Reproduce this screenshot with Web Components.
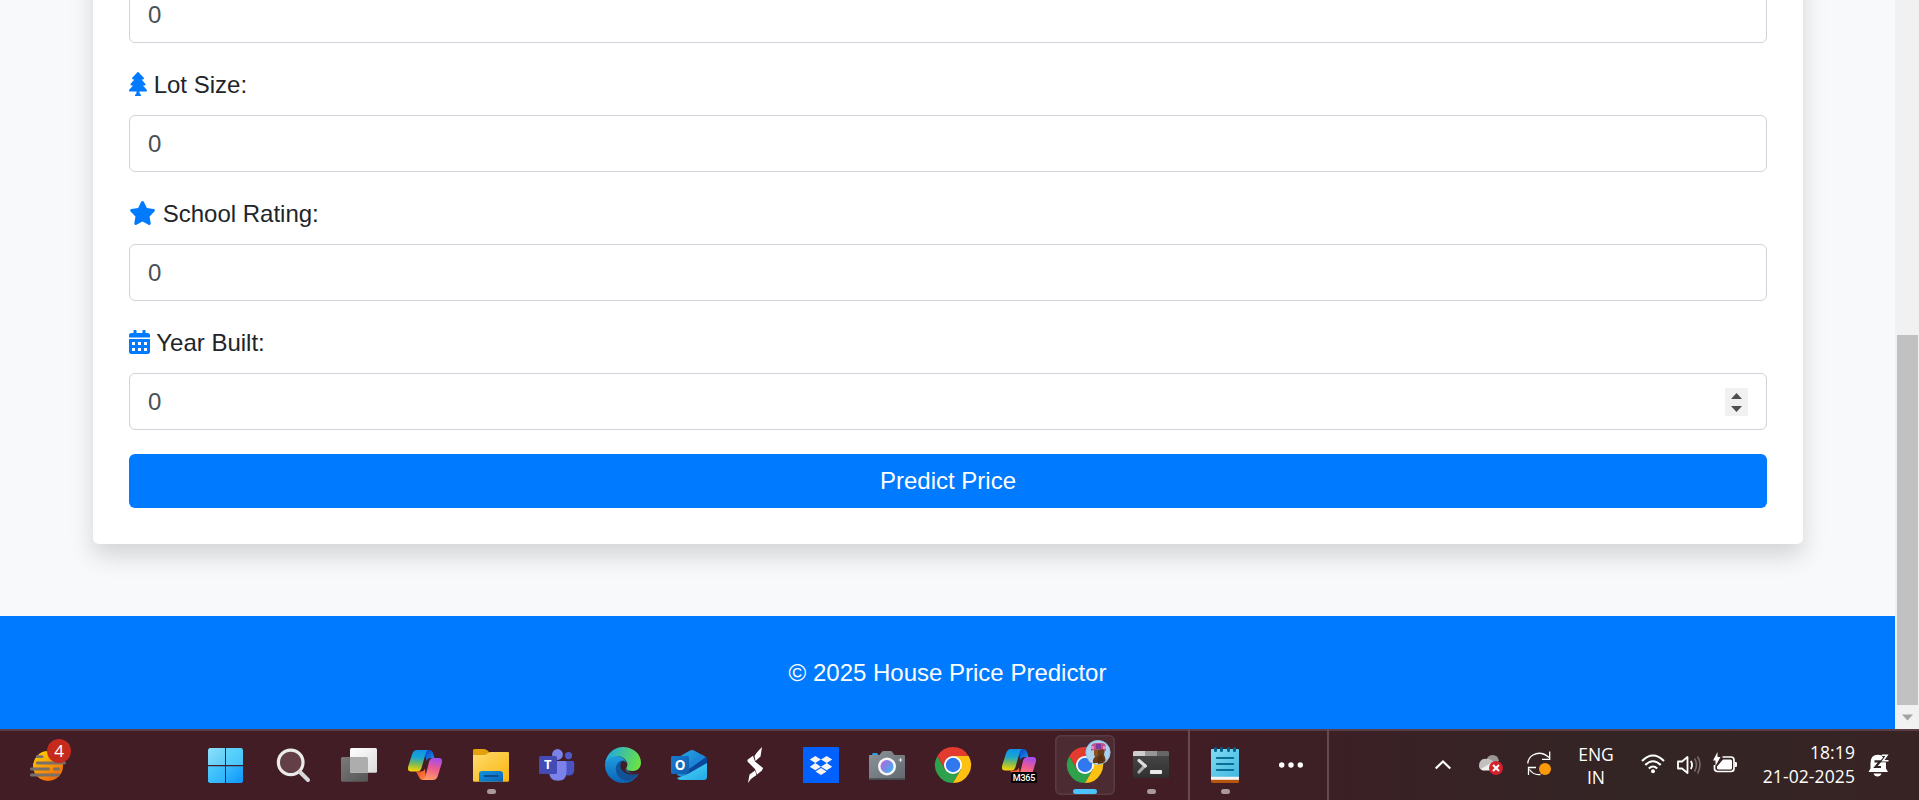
<!DOCTYPE html>
<html lang="en">
<head>
<meta charset="utf-8">
<title>House Price Predictor</title>
<style>
html,body{margin:0;height:100%;overflow:hidden}
body{font-family:"Liberation Sans",Arial,sans-serif;font-size:24px;line-height:36px;color:#212529;background:#f8f9fb}
</style>
</head>
<body>
<desktop-screen>
  <page-view slot="page">
    <predict-card>
      <form-field value="0"></form-field>
      <form-field icon="tree" value="0">Lot Size:</form-field>
      <form-field icon="star" value="0">School Rating:</form-field>
      <form-field icon="calendar" value="0" stepper>Year Built:</form-field>
      <submit-button>Predict Price</submit-button>
    </predict-card>
    <page-footer slot="footer">© 2025 House Price Predictor</page-footer>
  </page-view>
  <scroll-bar slot="scroll"></scroll-bar>
  <task-bar slot="taskbar"></task-bar>
</desktop-screen>

<script>
const define = (name, html) => customElements.define(name, class extends HTMLElement {
  constructor() {
    super();
    this.attachShadow({mode: 'open'});
  }
  connectedCallback() {
    this.shadowRoot.innerHTML = typeof html === 'function' ? html(this) : html;
  }
});

define('desktop-screen', `
<style>
:host{display:grid;grid-template:729px 71px / 1fr 24px;width:100%;height:800px;overflow:hidden}
.bar{grid-column:1 / 3;display:grid}
.cell{display:grid;min-height:0}
</style>
<div class="cell"><slot name="page"></slot></div>
<div class="cell"><slot name="scroll"></slot></div>
<div class="bar"><slot name="taskbar"></slot></div>`);

define('page-view', `
<style>
:host{display:flex;flex-direction:column;justify-content:flex-end;height:729px;overflow:hidden;background:#f8f9fb}
main{padding:0 92px 72px 93px}
</style>
<main><slot></slot></main><slot name="footer"></slot>`);

define('predict-card', `
<style>
:host{display:flex;flex-direction:column;gap:24px;padding:36px;background:#fff;border-radius:6px;box-shadow:0 12px 24px rgba(0,0,0,.15)}
</style><slot></slot>`);

const FIELD_ICONS = {
  tree: [384, 'M378.3 378.5 298.4 288h30.6c9 0 17-5 20.8-13.1 3.8-8 2.6-17.3-3.3-24L268.4 160h28.9c9.1 0 17.3-5.4 20.9-13.6 3.5-8.1 1.9-17.6-4.2-24.1L203.7 4.8c-6-6.4-17.3-6.4-23.3 0L70.1 122.3c-6.1 6.5-7.8 16-4.2 24.1 3.5 8.2 11.7 13.6 20.8 13.6h28.9l-78.1 90.9c-5.8 6.8-7.1 16-3.3 24C38 283 45.9 288 55 288h30.6L5.7 378.5c-6 6.8-7.4 16.1-3.6 24.3C5.8 410.7 13.6 416 22.6 416H160v30.3l-31.2 43.1c-5.4 10.6 2.4 22.6 14.4 22.6h97.6c11.9 0 19.7-12 14.4-22.6L224 446.3V416h137.4c8.9 0 16.8-5.3 20.4-13.3 3.9-8.1 2.5-17.4-3.5-24.2z'],
  star: [576, 'M316.9 18C311.6 7 300.4 0 288.1 0s-23.4 7-28.8 18L195 150.3 51.4 171.5c-12 1.8-22 10.2-25.7 21.7s-.7 24.2 7.9 32.7L137.8 329 113.2 474.7c-2 12 3 24.2 12.9 31.3s23 8 33.8 2.3l128.3-68.5 128.3 68.5c10.8 5.7 23.9 4.9 33.8-2.3s14.9-19.3 12.9-31.3L438.5 329 542.7 225.9c8.6-8.5 11.7-21.2 7.9-32.7s-13.7-19.9-25.7-21.7L381.2 150.3 316.9 18z'],
  calendar: [448, 'M148 0q12 0 12 12V64H288V12q0-12 12-12h40q12 0 12 12V64h48c26.500 0 48 21.500 48 48v48H0V112C0 85.500 21.500 64 48 64H96V12q0-12 12-12zM0 192H448V464c0 26.500-21.500 48-48 48H48c-26.500 0-48-21.500-48-48ZM64 256V320H128V256ZM192 256V320H256V256ZM320 256V320H384V256ZM64 384V448H128V384ZM192 384V448H256V384ZM320 384V448H384V384Z']
};

define('form-field', el => {
  const icon = FIELD_ICONS[el.getAttribute('icon')];
  return `
<style>
:host{display:block}
.label{height:36px;margin-bottom:12px;white-space:nowrap}
svg{height:24px;vertical-align:-3px;fill:#007bff;overflow:visible}
.input{display:flex;align-items:center;justify-content:space-between;box-sizing:border-box;height:57px;padding:0 18px;border:1px solid #ced4da;border-radius:6px;background:#fff;color:#495057}
.step{display:block;width:23px;height:28px;background:#f1f1f1}
</style>
${icon ? `<div class="label"><svg width="${icon[0] * 24 / 512}" viewBox="0 0 ${icon[0]} 512"><path fill-rule="evenodd" d="${icon[1]}"/></svg> <slot></slot></div>` : ''}
<div class="input"><span>${el.getAttribute('value')}</span>
${el.hasAttribute('stepper') ? '<svg class="step" viewBox="0 0 23 28"><path fill="#505050" d="M6 11 11.500 5 17 11ZM6 18 11.500 24 17 18Z"/></svg>' : ''}</div>`;
});

define('submit-button', `
<style>:host{display:block;height:54px;line-height:54px;text-align:center;color:#fff;background:#007bff;border-radius:6px}</style><slot></slot>`);

define('page-footer', `
<style>:host{display:block;padding:39px 0 38px;text-align:center;color:#fff;background:#007bff}</style><slot></slot>`);

define('scroll-bar', `
<style>
:host{display:grid;grid-template-rows:335px 369.500px 24.500px;background:#f1f1f1}
.thumb{margin:0 1px 0 2px;background:#c1c1c1}
svg{display:block;width:24px;height:24px}
</style>
<div></div><div class="thumb"></div><svg viewBox="0 0 24 24"><path fill="#a3a3a3" d="M7 9.500h11l-5.500 6z"/></svg>`);

const lin = (id, a, b, dir = 'x1="0" y1="0" x2="1" y2="1"') =>
  `<linearGradient id="${id}" ${dir}><stop stop-color="${a}"/><stop offset="1" stop-color="${b}"/></linearGradient>`;
const down = 'x1="0" y1="0" x2="0" y2="1"';

const chrome = `
<path fill="#e33b2e" d="M18 18 2.400 9A18 18 0 0 1 33.600 9Z"/>
<path fill="#2da14c" d="M2.400 9A18 18 0 0 0 18 36L25.800 22.500 10.200 22.500Z"/>
<path fill="#fdc112" d="M33.600 9A18 18 0 0 1 18 36L25.800 22.500 18 9Z"/>
<path fill="#e33b2e" d="M2.400 9 10.200 22.500 18 18 18 9Z"/>
<circle cx="18" cy="18" r="9" fill="#fff"/><circle cx="18" cy="18" r="7.200" fill="#2f78ee"/>`;

const ribbon = `
<defs>
<linearGradient id="ra" x1=".4" y1="0" x2=".3" y2="1"><stop stop-color="#0f93e8"/><stop offset=".35" stop-color="#1ba6cf"/><stop offset=".65" stop-color="#7dbb55"/><stop offset="1" stop-color="#ffd400"/></linearGradient>
<linearGradient id="rb" x1=".6" y1="0" x2=".4" y2="1"><stop stop-color="#a24df0"/><stop offset=".45" stop-color="#ec5a92"/><stop offset="1" stop-color="#ff9a66"/></linearGradient>
${lin('rc', '#0b35c9', '#1b9be8', 'x1="0" y1="0" x2="1" y2="1"')}${lin('rd', '#e8432f', '#ff8a3a')}
</defs>
<path fill="url(#rc)" d="M17 3h5q3 0 4 3l1.500 5h-4q-3 0-4 3z"/>
<path fill="url(#rd)" d="M9 24.500h5q3 0 4-3l1 11.500h-3q-3 0-4-3z"/>
<path fill="url(#ra)" d="M10 3h12q-2.500 0-3.500 4l-4 14q-1 3.500-4.500 3.500H4q-4 0-2.800-5l4-12.500Q6.500 3 10 3Z"/>
<path fill="url(#rb)" d="M26 33H15q2.500-.5 3.500-4l3.500-14q1-4 4.500-4H32q4 0 2.800 5l-4 13Q29.600 33 26 33Z"/>`;

const APP_ICONS = {
  start: `<defs>${lin('g1', '#8be0fc', '#5cc9f6')}${lin('g2', '#62d6fc', '#45c3fa')}${lin('g3', '#4fcbfb', '#2ab1fb')}${lin('g4', '#3dbdfb', '#0b96fb')}</defs>
<path fill="url(#g1)" d="M2.500 1H18v17H1V2.500Z"/><path fill="url(#g2)" d="M19 1H34.500L36 2.500V18H19Z"/><path fill="url(#g3)" d="M1 19.300H18V36H2.500L1 34.500Z"/><path fill="url(#g4)" d="M19 19.300H36V34.500L34.500 36H19Z"/>`,
  search: `<circle cx="15.700" cy="15.400" r="12.300" fill="#634047" stroke="#ebebeb" stroke-width="3.200"/><path d="m25 25 8 8" stroke="#d8d8da" stroke-width="4" stroke-linecap="round"/>`,
  tasks: `<defs>${lin('g1', '#fff', '#dcdcdc')}${lin('g2', '#7a7a7a', '#555')}</defs>
<rect y="10" width="27" height="24.700" rx="1.500" fill="url(#g2)"/><rect x="9" y="1" width="27" height="24.700" rx="1.500" fill="url(#g1)"/><path fill="#adadad" d="M9 10H25.500Q27 10 27 11.500V25.700H10.500Q9 25.700 9 24.200Z"/>`,
  copilot: ribbon,
  explorer: `<defs>${lin('g1', '#ffdb6e', '#f9b60e')}${lin('g2', '#1195dc', '#0a62b8')}</defs>
<path fill="#e5a00d" d="M0 3.500Q0 2 1.500 2H11q2 0 3.500 1.500L16 5v4H0Z"/><path fill="url(#g1)" d="M0 8H11q2 0 3.500-1.500T17.500 5H35q1 0 1 1V33.500q0 1.200-1.200 1.200H1.200Q0 34.700 0 33.500Z"/><path fill="url(#g2)" d="M6 34.700V27q0-3 3-3H27q3 0 3 3v7.700Z"/><path stroke="#0d4b8a" stroke-width="1.800" stroke-linecap="round" d="M11.500 29H24.500"/>`,
  teams: `<circle cx="29.500" cy="8.600" r="3.600" fill="#5059c9"/><path fill="#4a53c2" d="M25 14H33.500q1.700 0 1.700 1.700V23q0 5.500-5.500 5.500T25 25Z"/>
<circle cx="18.500" cy="7.500" r="5.400" fill="#7b83eb"/><path fill="#7b83eb" d="M11 14H26q1.500 0 1.500 1.500V25q0 8.700-8.500 8.700T10 25Z"/>
<rect y="9" width="18" height="18" rx="1.500" fill="#454bb5"/><text x="8.800" y="22.400" text-anchor="middle" font-family="Open Sans,sans-serif" font-weight="700" font-size="13" fill="#fff">T</text>`,
  edge: `<defs>${lin('g1', '#1ea7e4', '#6be344', 'x1="0" y1=".3" x2="1" y2=".55"')}${lin('g2', '#1f9fe0', '#0b62b5', down)}${lin('g3', '#0c59a4', '#164c8c')}</defs>
<path fill="url(#g2)" d="M1 13Q5 8 12 9c6 .6 10 5 9.500 9-.5 2-1.500 2.800-.5 4.500 3 4 8 4.500 13 3.500Q29 36 18 36A18 18 0 0 1 0 18Z"/>
<path fill="url(#g3)" d="M14.500 14.500C8 19 10 31 20 33.500c5 1.500 9-1 13.500-7.500-5 2.500-11 1.500-14-2C15 19 17 15 20.500 14c-2-1-4-.5-6 .5Z"/>
<path fill="url(#g1)" d="M0 17C1 7 9 0 18 0c10 0 18 7 18 15.500 0 6-4 8.500-9 8.500-4.500 0-7-2-5-4.500C24 15 18 8.500 11.500 9 5 9.500 1 13 0 17Z"/>
<path fill="#421d25" d="M17 14.300q5-.6 5 3.500-.2 2-1.500 4c-.5 3 4 5 10 4.400l4.500-1.300-1.200 1.900Q25 29.500 19 25T17 14.300Z"/>`,
  outlook: `<defs>${lin('g1', '#25a9ea', '#1168bd')}${lin('g2', '#57d8f6', '#1fa9e7')}${lin('g3', '#1b7cd0', '#0e5bab')}</defs>
<path fill="url(#g1)" d="M6 11 18.500 3.800q2.500-1.400 5 0L34 9.500q2 1.200 2 3.500V18L15 32 6 28Z"/>
<path fill="#1a86d7" d="m32 8.500 3 2L15 25l-3-4L30 7.500Z"/>
<path fill="#0a479b" d="M35 10q1 1 1 3v4L18 28V22Z"/>
<path fill="url(#g2)" d="M15 28 36 16V30q0 3-3 3H10q-3 0-4-2Z"/>
<rect y="9" width="18" height="18" rx="1.500" fill="url(#g3)"/><text x="9" y="22.800" text-anchor="middle" font-family="Open Sans,sans-serif" font-weight="700" font-size="13.500" fill="#fff">O</text>`,
  bolt: `<path fill="#fff" d="M25 0 23.500 9.500 18.500 14 17.500 9Q19.500 5.500 25 0ZM16 8.700 18 14.500 26 21 25 23.500 20 27.500 18 22 10.500 14.500V12.800ZM18 23.500 19.500 28Q14 31 11 36L12.500 27.500Z"/>`,
  dropbox: `<path fill="#0061fe" d="M0 0H36V36H0Z"/><path fill="#f7f4ef" d="m12.300 9 5.600 3.600-5.600 3.500-5.500-3.500ZM23.700 9l5.500 3.600-5.500 3.500-5.800-3.500ZM12.300 16.100l5.600 3.600-5.600 3.500-5.500-3.500ZM23.700 16.100l5.500 3.600-5.500 3.500-5.800-3.500ZM18 21l5.600 3.500L18 28l-5.500-3.500Z"/>`,
  camera: `<defs>${lin('g1', '#8d9499', '#62696e')}${lin('g2', '#b365e0', '#35b6ee', 'x1="0" y1=".2" x2="1" y2=".9"')}</defs>
<rect x="3" y="6" width="6" height="4" rx="1.500" fill="#1fa6e8"/><path fill="url(#g1)" d="M1 8H10.500L13 4.700Q13.500 4 14.500 4h7q1 0 1.500.7L25.500 8H35q1 0 1 1V32q0 1-1 1H1q-1 0-1-1V9Q0 8 1 8Z"/><path fill="#474c50" d="M0 31.200H36V32q0 1-1 1H1q-1 0-1-1Z"/>
<circle cx="18" cy="19.500" r="9" fill="#f5f5f5"/><circle cx="18" cy="19.500" r="6.500" fill="url(#g2)"/><path stroke="#e4e4e4" stroke-width="1" d="M31.500 11v4M29.500 13h4"/>`,
  chrome,
  m365: `<g transform="translate(0 -1)">${ribbon}</g><rect x="10" y="25" width="26" height="11" rx="1.500" fill="#050505"/><text x="23" y="33.600" text-anchor="middle" font-family="Roboto,sans-serif" font-weight="500" font-size="9" textLength="22.500" fill="#fff">M365</text>`,
  profile: `${chrome}<clipPath id="av"><circle cx="31" cy="5.500" r="12.300"/></clipPath><g clip-path="url(#av)"><path fill="#a9d2ee" d="M18-8H45V19H18Z"/><path fill="#6b3b18" d="M27 2h11l-1 6q3 5 0 8l-5 1-6-1q-1-3 2-6z"/><path fill="#8a5220" d="M27 3h4v5l-2 2-2-2z"/><path fill="#59300f" d="M34 7q4 3 2 9l-5 1q-2-5 3-10Z"/><path fill="#c0508f" d="M24 0q0-4 6-4h4q5 0 5 4v4q-4-3-7-1-4-1-8 1Z"/><path fill="#7b3c9c" d="M29-3h5v5h-5Z"/><path fill="#e68ab8" d="M24-1h3v3h-3zM36-1h3v3h-3z"/><path fill="#f0d4c4" d="M21 14q3-3 5 1l-2 2zM28 16h3v2h-3z"/></g><circle cx="31" cy="5.500" r="12" fill="none" stroke="#8bc0e8" stroke-width=".8"/>`,
  terminal: `<defs>${lin('g1', '#4a4a4a', '#303030', down)}</defs><rect y="4" width="36" height="27" rx="1.500" fill="url(#g1)"/><path fill="#cfcfcf" d="M0 9V5.500Q0 4 1.500 4H12V9Z"/><path fill="#979797" d="M12 4H24V9H12Z"/><path fill="#666" d="M24 4H34.500Q36 4 36 5.500V9H24Z"/>
<path fill="none" stroke="#a9a9a9" stroke-width="3.200" stroke-linecap="round" d="m6 25 6-6.300"/><path fill="none" stroke="#dedede" stroke-width="3.200" stroke-linecap="round" d="m6 13.500 6.300 5.500"/><rect x="17" y="23" width="12" height="4" rx=".8" fill="#e9e9e9"/>`,
  notepad: `<defs>${lin('g1', '#83dcf4', '#3fb7df')}</defs><path fill="#b9540d" d="M4 30H32V34.500Q32 36 30.500 36H5.500Q4 36 4 34.500Z"/><path fill="#f4f4f4" d="M4 28H32V32.800H4Z"/><path fill="url(#g1)" d="M5 2H31q1 0 1 1V29.700H4V3Q4 2 5 2Z"/><g fill="#06628a"><rect x="7" y="0" width="3" height="5" rx="1.500"/><rect x="13" y="0" width="3" height="5" rx="1.500"/><rect x="20" y="0" width="3" height="5" rx="1.500"/><rect x="26" y="0" width="3" height="5" rx="1.500"/></g><path stroke="#0a6d96" stroke-width="1.900" stroke-linecap="round" d="M9.800 11h16.500M9.800 17h16.500M9.800 23h16.500"/>`,
  more: `<g fill="#fff"><circle cx="8.700" cy="18" r="2.700"/><circle cx="18" cy="18" r="2.700"/><circle cx="27.300" cy="18" r="2.700"/></g>`
};

define('task-app', el => `
<style>
:host{display:flex;flex-direction:column;align-items:center;box-sizing:border-box;width:60px;height:60px;padding-top:12px;border-radius:6px}
:host([active]){background:#4c2b33;box-shadow:inset 0 0 0 1.500px #5a3b42}
svg{display:block;flex:none;width:36px;height:36px;overflow:visible}
i{display:block;width:9px;height:5px;margin-top:6px;border-radius:2.500px;background:#ab989c}
:host([active]) i{width:24px;background:#4cc2ff}
</style>
<svg viewBox="0 0 36 36" fill="none">${APP_ICONS[el.getAttribute('name')]}</svg>${el.hasAttribute('open') ? '<i></i>' : ''}`);

define('weather-widget', `
<style>
:host{display:block;position:relative;width:36px;height:30px}
svg{display:block;overflow:visible}
b{position:absolute;left:17px;top:-11.500px;width:24px;height:24px;border-radius:50%;background:#c42b1c;color:#fff;font:400 17px/23px "Open Sans",sans-serif;text-align:center}
</style>
<svg width="36" height="30" viewBox="0 0 36 30"><defs>${lin('s', '#ffd000', '#f0600c', 'x1=".2" y1="0" x2=".8" y2="1"')}</defs><circle cx="18" cy="15" r="15" fill="url(#s)"/><path stroke="#77716a" stroke-width="2.800" stroke-linecap="round" d="M7.300 5.700h4.800M7.300 12H34.500M1.400 18H18.500M24.400 18h4.200M1.400 24H28.500"/></svg><b>4</b>`);

const TRAY_ICONS = {
  chevron: `<path d="m4.700 15.500 7.300-7 7.300 7" stroke-width="2.200"/>`,
  cloud: `<g stroke="none"><path fill="#9b9797" d="M7 9Q8 2 13.500 2 19 2 20 8L10 14Z"/><path fill="#c3c0c0" d="M1 9q2-4 7-3 2-1 7 3L5 17.500Q0 17 0 13q0-3 1-4Z"/><path fill="#f0f0f0" d="M2 16 12 10l6 7.500H6q-3 0-4-1.500Z"/><circle cx="17" cy="15" r="7" fill="#d4222d"/></g><path d="m14 12 6 6m0-6-6 6" stroke-width="2"/>`,
  sync: `<path d="M.8 10.500Q1 5 6 2 14-2.500 22 4.500M22.700-1.500V6.300H15M9 14.500H1.500V22M2.500 16.500q4 6 11 5" stroke-width="1.300"/><circle cx="18" cy="16" r="6" fill="#fc9a0a" stroke="none"/>`,
  wifi: `<path d="M1 8Q12-3 23 8M4.300 12Q12 4.500 19.700 12M7.800 15.500q4.200-4 8.400 0" stroke-width="2.100"/><circle cx="12" cy="18.300" r="2" fill="#fff" stroke="none"/>`,
  speaker: `<path d="M1 8.500H5L10.500 4V20L5 15.500H1Z" stroke-width="1.800" stroke-linejoin="round"/><path d="M13.800 8q2.500 4 0 8" stroke-width="1.800"/><path d="M17.500 5.500q4 6.500 0 13M20.500 3.500q5 8.500 0 17" stroke="#786b6b" stroke-width="1.600"/>`,
  battery: `<path d="M9.500 4H18q3 0 3 3v8.500q0 3-3 3H4.500q-3 0-3-3V12" stroke-width="1.700"/><path fill="#fff" stroke="none" d="M10 6.500h7.500q1.500 0 1.500 1.500v7q0 1.500-1.500 1.500H5.500q-1.500 0-1.500-1.500v-1.500ZM22 9h.8q1.200 0 1.200 1.200v2.600q0 1.200-1.200 1.200H22ZM4.500-1V4H7.500L2.500 13V7.500H0Z"/>`,
  bell: `<path fill="#fff" stroke="none" d="M.5 19 2.500 15.500V10Q2.500 1.800 10 1.800T18 10v5.500l2 3.500ZM5.500 20.500h8q-1 3-4 3t-4-3Z"/><path d="M14.200 2.300h4.500L15 7.500h5.500" stroke="#342525" stroke-width="3.600"/><path d="M6.500 8.300h5.700L7.500 14H13" stroke="#342525" stroke-width="2.200"/><path d="M14 2.300h5L15 7.800h5.500" stroke-width="1.600"/>`
};

define('tray-icon', el => `
<style>:host{display:block;width:24px;height:24px}svg{display:block;overflow:visible}</style>
<svg width="24" height="24" viewBox="0 0 24 24" fill="none" stroke="#fff" stroke-linecap="butt">${TRAY_ICONS[el.getAttribute('name')]}</svg>`);

define('task-bar', `
<style>
:host{display:flex;align-items:center;box-sizing:border-box;height:71px;border-top:2px solid #5b3e45;background:linear-gradient(90deg,#421d25 0,#421d25 61%,#392126 72%,#332524 86%,#382324 100%);color:#fff;font:18px/24px "Open Sans",sans-serif}
weather-widget{margin:0 129px 0 30px}
.apps{display:flex;gap:6px;margin-bottom:1px}
.pinned task-app:first-child{margin-right:2px}
hr{flex:none;width:2px;height:71px;margin:-2px 0 0;border:0;background:#674a50}
.tail{margin:0 6px 1px 5px}
.tray{display:flex;align-items:center;flex:1;margin-bottom:2px}
.lang{width:40px;text-align:center;margin:3px 25px 0;line-height:22.700px;font-size:17.500px}
.clock{width:100px;margin:1px 13px 0 18px;text-align:right;font-size:17.500px;letter-spacing:.1px;line-height:23.800px;white-space:nowrap}
</style>
<weather-widget></weather-widget>
<div class="apps pinned">
${['start', 'search', 'tasks', 'copilot', 'explorer open', 'teams', 'edge', 'outlook', 'bolt', 'dropbox', 'camera', 'chrome', 'm365', 'profile open active', 'terminal open'].map(s => { const [n, ...a] = s.split(' '); return `<task-app name="${n}" ${a.join(' ')}></task-app>`; }).join('')}
</div>
<hr style="margin-left:7px">
<div class="apps tail"><task-app name="notepad" open></task-app><task-app name="more"></task-app></div>
<hr>
<div class="tray">
<tray-icon name="chevron" style="margin-left:102px"></tray-icon>
<tray-icon name="cloud" style="margin-left:24px"></tray-icon>
<tray-icon name="sync" style="margin-left:24px"></tray-icon>
<div class="lang">ENG<br>IN</div>
<tray-icon name="wifi"></tray-icon>
<tray-icon name="speaker" style="margin-left:12px"></tray-icon>
<tray-icon name="battery" style="margin-left:12px"></tray-icon>
<div class="clock">18:19<br>21-02-2025</div>
<tray-icon name="bell"></tray-icon>
</div>`);
</script>
</body>
</html>
